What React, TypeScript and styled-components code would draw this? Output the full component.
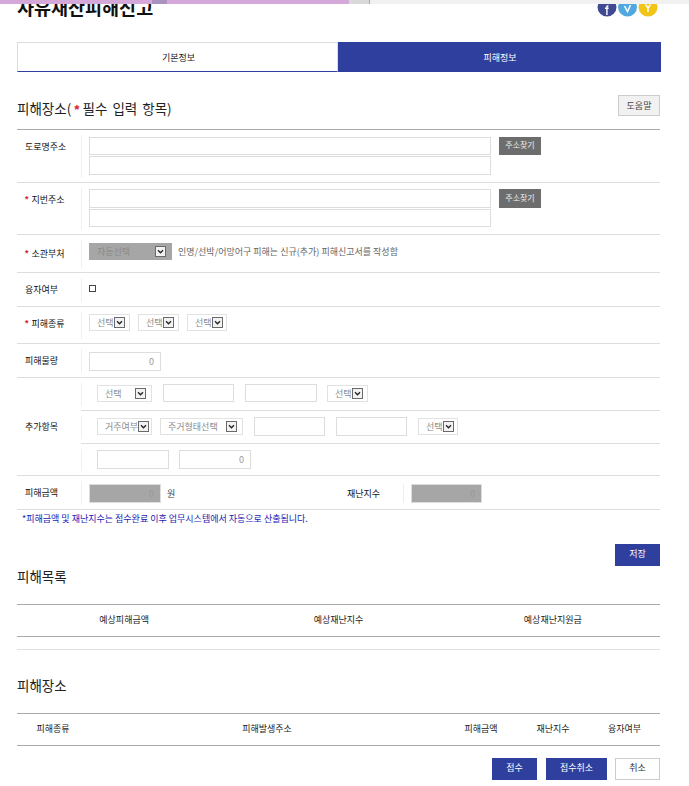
import React from "react";
import styled, { createGlobalStyle } from "styled-components";

const Global = createGlobalStyle`
  html, body { margin: 0; padding: 0; background: #fff; }
  body { font-family: "Noto Sans CJK KR", "Liberation Sans", sans-serif; font-size: 9px; color: #222; overflow: hidden; }
  * { box-sizing: border-box; }
`;

const Page = styled.div`
  position: relative;
  width: 689px;
  height: 786px;
  overflow: hidden;
  padding: 0 29px 0 17px;
`;

const TopStrip = styled.div`
  position: absolute;
  top: 0;
  left: 0;
  right: 0;
  height: 4px;
  display: flex;
  z-index: 2;
`;

const StripPart = styled.div<{ $w: string; $bg: string; $edge?: string }>`
  width: ${(p) => p.$w};
  background: ${(p) => p.$bg};
  border-right: ${(p) => (p.$edge ? `1px solid ${p.$edge}` : "none")};
`;

const Header = styled.header`
  height: 42px;
  display: flex;
  justify-content: space-between;
  align-items: flex-start;
`;

const Title = styled.h1`
  margin: -3px 0 0;
  font-size: 18.5px;
  line-height: 20px;
  font-weight: 700;
  color: #111;
`;

const Social = styled.svg`
  display: block;
  width: 62px;
  height: 20px;
  margin: -3px 1px 0 0;
`;

const Tabs = styled.div`
  display: flex;
  height: 30px;
  margin-right: -1px;
`;

const Tab = styled.div<{ $active?: boolean }>`
  flex: 0 0 ${(p) => (p.$active ? "323px" : "321px")};
  display: flex;
  align-items: center;
  justify-content: center;
  padding: ${(p) => (p.$active ? "0 0 0 1px" : "1px 0 0 2px")};
  background: ${(p) => (p.$active ? "#2f3f9e" : "#fff")};
  color: ${(p) => (p.$active ? "#fff" : "#222")};
  border: ${(p) => (p.$active ? "none" : "1px solid #ddd")};
  border-bottom: ${(p) => (p.$active ? "none" : "1px solid #2f3f9e")};
`;

const SectionHead = styled.div`
  height: 57px;
  display: flex;
  justify-content: space-between;
  align-items: flex-start;
  padding-top: 23px;
`;

const SectionTitle = styled.h2`
  margin: 4px 0 0;
  font-size: 13.5px;
  line-height: 18px;
  font-weight: 400;
  word-spacing: 2px;
  color: #222;
`;

const Star = styled.span<{ $gap?: string }>`
  color: #d8202c;
  font-family: "Liberation Sans", sans-serif;
  font-weight: 700;
  margin: ${(p) => p.$gap || "0 3px 0 0"};
`;

const HelpButton = styled.button`
  width: 42px;
  height: 21px;
  padding: 0;
  background: #f1f1f1;
  border: 1px solid #ccc;
  color: #444;
  font: inherit;
`;

const Form = styled.div`
  border-top: 1px solid #aaa;
`;

const Row = styled.div<{ $h: number }>`
  display: grid;
  grid-template-columns: 64px 1fr;
  height: ${(p) => p.$h}px;
  border-bottom: 1px solid #ddd;
`;

const Label = styled.div<{ $top?: number; $up?: number }>`
  display: flex;
  align-items: ${(p) => (p.$top ? "flex-start" : "center")};
  padding: ${(p) => p.$top ?? 0}px 0 ${(p) => p.$up ?? 0}px 8px;
  line-height: 13px;
  color: #111;
`;

const Value = styled.div<{ $top?: number; $pad?: number; $up?: number }>`
  display: flex;
  align-items: ${(p) => (p.$top ? "flex-start" : "center")};
  margin: 5px 0 4px;
  padding: ${(p) => p.$top ?? 0}px 0 ${(p) => p.$up ?? 0}px ${(p) => p.$pad ?? 7}px;
  border-left: 1px solid #f0f0f0;
`;

const AddressStack = styled.div`
  display: flex;
  flex-direction: column;
  gap: 1px;
  width: 402px;
  margin-right: 8px;
`;

const TextBox = styled.input<{ $w?: number; $h?: number; $off?: boolean }>`
  display: block;
  width: ${(p) => (p.$w ? `${p.$w}px` : "100%")};
  height: ${(p) => p.$h ?? 19}px;
  margin: 0;
  padding: 0 6px;
  background: ${(p) => (p.$off ? "#a6a6a6" : "#fff")};
  border: 1px solid #ddd;
  border-radius: 0;
  outline: none;
  color: #999;
  font: inherit;
  text-align: right;
  flex: none;
`;

const FindButton = styled.button<{ $h: number }>`
  width: 42px;
  height: ${(p) => p.$h}px;
  padding: 0 0 3px;
  background: #6d6d6d;
  border: none;
  color: #eee;
  font: inherit;
  font-size: 8px;
`;

const SelectBox = styled.div<{ $w: number; $off?: boolean }>`
  flex: none;
  display: flex;
  align-items: center;
  justify-content: space-between;
  width: ${(p) => p.$w}px;
  height: 17px;
  padding: 0 5px 0 7px;
  background: ${(p) => (p.$off ? "#a6a6a6" : "#fff")};
  border: 1px solid ${(p) => (p.$off ? "#a6a6a6" : "#e2e2e2")};
  color: ${(p) => (p.$off ? "#8a8a8a" : "#8c8c8c")};
  white-space: nowrap;
`;

const Chevron = styled.svg`
  flex: none;
  display: block;
  width: 11px;
  height: 11px;
`;

const Hint = styled.span`
  margin-left: 6px;
  color: #666;
  white-space: nowrap;
`;

const Check = styled.input`
  appearance: none;
  display: block;
  width: 7px;
  height: 7px;
  margin: 0 0 3px;
  background: #fff;
  border: 1px solid #444;
`;

const Inline = styled.div<{ $gap: number; $ml?: number }>`
  display: flex;
  align-items: center;
  gap: ${(p) => p.$gap}px;
  margin-left: ${(p) => p.$ml ?? 0}px;
`;

const Stack = styled.div`
  display: flex;
  flex-direction: column;
`;

const Sub = styled.div<{ $h: number; $last?: boolean }>`
  height: ${(p) => p.$h}px;
  display: flex;
  align-items: stretch;
  border-bottom: ${(p) => (p.$last ? "none" : "1px solid #ddd")};
`;

const SubInner = styled.div<{ $up: number }>`
  flex: 1;
  display: flex;
  align-items: center;
  margin: 5px 0 4px;
  padding: 0 0 ${(p) => p.$up}px 15px;
  border-left: 1px solid #f0f0f0;
`;

const Unit = styled.span`
  margin-left: 6px;
  color: #444;
`;

const Amount = styled.div`
  display: grid;
  grid-template-columns: 257px 64px 1fr;
  align-items: stretch;
  flex: 1;
`;

const AmountLabel = styled.div`
  display: flex;
  align-items: center;
  padding-left: 8px;
  color: #111;
`;

const AmountCell = styled.div<{ $line?: boolean }>`
  display: flex;
  align-items: center;
  padding-left: 7px;
  border-left: ${(p) => (p.$line ? "1px solid #eee" : "none")};
`;

const Note = styled.p`
  margin: 0;
  height: 34px;
  padding: 2px 0 0 5px;
  line-height: 14px;
  color: #1a1ab4;
  white-space: nowrap;
`;

const RightBar = styled.div<{ $gap?: number; $mt?: number }>`
  display: flex;
  justify-content: flex-end;
  gap: ${(p) => p.$gap ?? 0}px;
  margin-top: ${(p) => p.$mt ?? 0}px;
`;

const ActionButton = styled.button<{ $w: number; $plain?: boolean }>`
  width: ${(p) => p.$w}px;
  height: 22px;
  margin-left: ${(p) => (p.$plain ? "-1px" : "0")};
  padding: 0 0 3px;
  background: ${(p) => (p.$plain ? "#fff" : "#2f3f9e")};
  border: ${(p) => (p.$plain ? "1px solid #ccc" : "none")};
  color: ${(p) => (p.$plain ? "#333" : "#fff")};
  font: inherit;
`;

const ListTitle = styled.h3<{ $mt?: number }>`
  margin: ${(p) => p.$mt ?? 0}px 0 0;
  height: 38px;
  font-size: 13.5px;
  line-height: 20px;
  font-weight: 400;
  color: #222;
`;

const ListHead = styled.div<{ $cols: string }>`
  display: grid;
  grid-template-columns: ${(p) => p.$cols};
  height: 33px;
  border-top: 1px solid #aaa;
  border-bottom: 1px solid #aaa;
`;

const ListCell = styled.div`
  display: flex;
  align-items: center;
  justify-content: center;
  padding-bottom: 2px;
  color: #222;
`;

const EmptyRow = styled.div`
  height: 13px;
  border-bottom: 1px solid #e0e0e0;
`;

const ChevronIcon = () => (
  <Chevron viewBox="0 0 11 11">
    <rect x="0.5" y="0.5" width="10" height="10" fill="#f2f2f2" stroke="#6a6a6a" />
    <path d="M3 4.2 L5.5 6.8 L8 4.2" fill="none" stroke="#222" strokeWidth="1.3" />
  </Chevron>
);

const Select = ({ w, text, off }: { w: number; text: string; off?: boolean }) => (
  <SelectBox $w={w} $off={off}>
    <span>{text}</span>
    <ChevronIcon />
  </SelectBox>
);

export default function App() {
  return (
    <Page>
      <Global />
      <TopStrip>
        <StripPart $w="152px" $bg="#d4a9d9" />
        <StripPart $w="15px" $bg="#a992bd" />
        <StripPart $w="182px" $bg="#d4a9d9" />
        <StripPart $w="21px" $bg="#d9d9d9" $edge="#aaa" />
        <StripPart $w="319px" $bg="#f1f1f1" />
      </TopStrip>

      <Header>
        <Title>사유재산피해신고</Title>
        <Social viewBox="0 -3 62 20">
          <circle cx="10" cy="7" r="9.5" fill="#3f4a92" />
          <path d="M9.2 15 V9 H8 V7.6 H9.2 V6.6 Q9.2 5 11.4 5 V6.4 Q10.6 6.4 10.6 7 V7.6 H11.6 V9 H10.6 V15 Z" fill="#fff" />
          <circle cx="30.5" cy="7" r="9.5" fill="#4fa8e0" />
          <path d="M27.5 6 L30.5 11.5 L33.5 5" fill="none" stroke="#fff" strokeWidth="1.5" />
          <circle cx="51" cy="7" r="9.5" fill="#f0c419" />
          <path d="M51 7 V12 M48.5 4.5 L51 8 L53.5 4.5" fill="none" stroke="#fff" strokeWidth="1.4" />
        </Social>
      </Header>

      <Tabs>
        <Tab>기본정보</Tab>
        <Tab $active>피해정보</Tab>
      </Tabs>

      <SectionHead>
        <SectionTitle>
          피해장소(<Star $gap="0 3px">*</Star>필수 입력 항목)
        </SectionTitle>
        <HelpButton>도움말</HelpButton>
      </SectionHead>

      <Form>
        <Row $h={53}>
          <Label $top={10}>도로명주소</Label>
          <Value $top={2}>
            <AddressStack>
              <TextBox $h={18} />
              <TextBox />
            </AddressStack>
            <FindButton $h={18}>주소찾기</FindButton>
          </Value>
        </Row>
        <Row $h={52}>
          <Label $top={10}>
            <Star>*</Star>지번주소
          </Label>
          <Value $top={1}>
            <AddressStack>
              <TextBox />
              <TextBox $h={18} />
            </AddressStack>
            <FindButton $h={19}>주소찾기</FindButton>
          </Value>
        </Row>
        <Row $h={38}>
          <Label>
            <Star>*</Star>소관부처
          </Label>
          <Value $up={6}>
            <Select w={83} text="자동선택" off />
            <Hint>인명/선박/어망어구 피해는 신규(추가) 피해신고서를 작성함</Hint>
          </Value>
        </Row>
        <Row $h={34}>
          <Label>융자여부</Label>
          <Value>
            <Check type="checkbox" />
          </Value>
        </Row>
        <Row $h={37}>
          <Label $up={4}>
            <Star>*</Star>피해종류
          </Label>
          <Value $up={6}>
            <Inline $gap={8.5}>
              <Select w={40.5} text="선택" />
              <Select w={40.5} text="선택" />
              <Select w={40} text="선택" />
            </Inline>
          </Value>
        </Row>
        <Row $h={34}>
          <Label $up={1}>피해물량</Label>
          <Value>
            <TextBox $w={72} readOnly value="0" />
          </Value>
        </Row>
        <Row $h={98}>
          <Label>추가항목</Label>
          <Stack>
            <Sub $h={33}>
              <SubInner $up={3}>
                <Select w={55} text="선택" />
                <Inline $gap={11} $ml={11}>
                  <TextBox $w={71} $h={18} />
                  <TextBox $w={72} $h={18} />
                </Inline>
                <Inline $gap={0} $ml={10}>
                  <Select w={41} text="선택" />
                </Inline>
              </SubInner>
            </Sub>
            <Sub $h={33}>
              <SubInner $up={3}>
                <Select w={55} text="거주여부" />
                <Inline $gap={0} $ml={8}>
                  <Select w={83} text="주거형태선택" />
                </Inline>
                <Inline $gap={11} $ml={11}>
                  <TextBox $w={71} />
                  <TextBox $w={71} />
                </Inline>
                <Inline $gap={0} $ml={11}>
                  <Select w={40} text="선택" />
                </Inline>
              </SubInner>
            </Sub>
            <Sub $h={31} $last>
              <SubInner $up={1}>
                <Inline $gap={10}>
                  <TextBox $w={72} />
                  <TextBox $w={72} readOnly value="0" />
                </Inline>
              </SubInner>
            </Sub>
          </Stack>
        </Row>
        <Row $h={34}>
          <Label>피해금액</Label>
          <Value $pad={0}>
            <Amount>
              <AmountCell>
                <TextBox $w={72} $off readOnly value="0" />
                <Unit>원</Unit>
              </AmountCell>
              <AmountLabel>재난지수</AmountLabel>
              <AmountCell $line>
                <TextBox $w={71} $off readOnly value="0" />
              </AmountCell>
            </Amount>
          </Value>
        </Row>
      </Form>

      <Note>*피해금액 및 재난지수는 접수완료 이후 업무시스템에서 자동으로 산출됩니다.</Note>

      <RightBar>
        <ActionButton $w={45}>저장</ActionButton>
      </RightBar>

      <ListTitle>피해목록</ListTitle>
      <ListHead $cols="1fr 1fr 1fr">
        <ListCell>예상피해금액</ListCell>
        <ListCell>예상재난지수</ListCell>
        <ListCell>예상재난지원금</ListCell>
      </ListHead>
      <EmptyRow />

      <ListTitle $mt={25}>피해장소</ListTitle>
      <ListHead $cols="72px 356px 72px 72px 71px">
        <ListCell>피해종류</ListCell>
        <ListCell>피해발생주소</ListCell>
        <ListCell>피해금액</ListCell>
        <ListCell>재난지수</ListCell>
        <ListCell>융자여부</ListCell>
      </ListHead>

      <RightBar $gap={9} $mt={12}>
        <ActionButton $w={45}>접수</ActionButton>
        <ActionButton $w={61}>접수취소</ActionButton>
        <ActionButton $w={45} $plain>
          취소
        </ActionButton>
      </RightBar>
    </Page>
  );
}
